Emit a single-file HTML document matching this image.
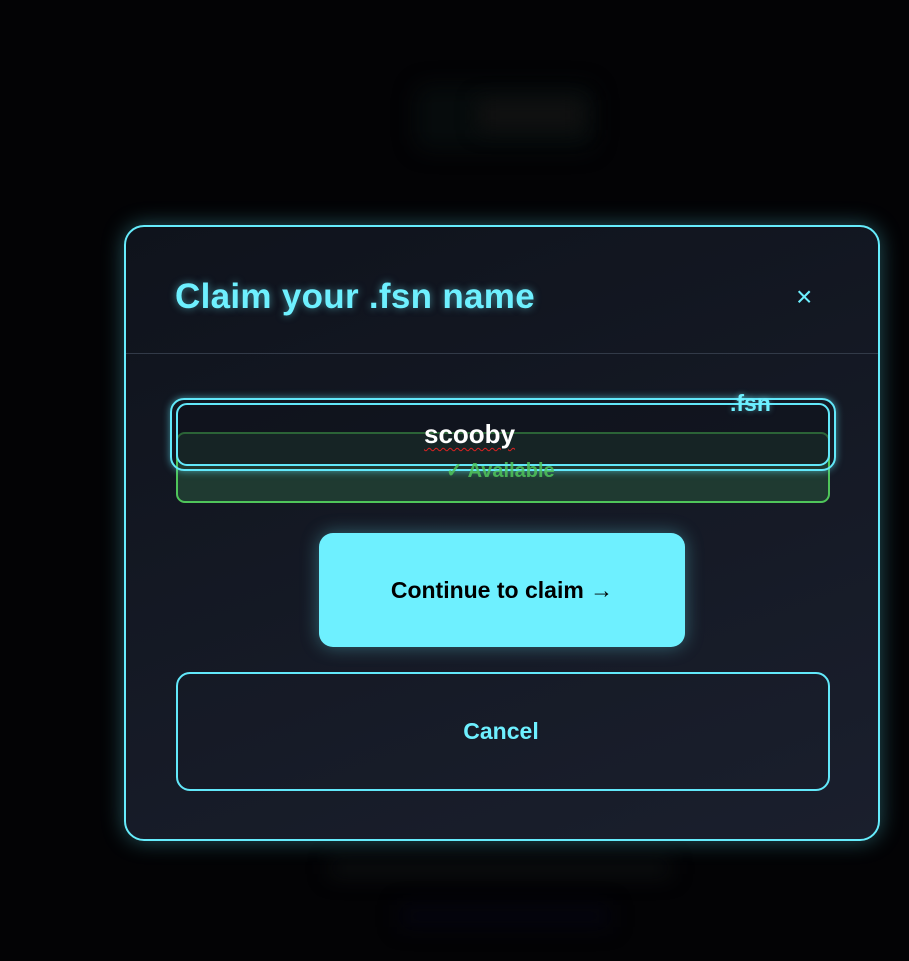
<!DOCTYPE html>
<html><head><meta charset="utf-8"><style>
*{margin:0;padding:0;box-sizing:border-box}
body{width:909px;height:961px;background:#030305;position:relative;overflow:hidden;font-family:"Liberation Sans",sans-serif}
.blob{position:absolute;filter:blur(10px)}
.modal{position:absolute;left:124px;top:225px;width:756px;height:616px;border:2px solid #66ecfc;border-radius:20px;background:linear-gradient(160deg,#0f131c,#1a1f2d);box-shadow:0 0 22px rgba(98,232,250,.35)}
.title{position:absolute;left:49px;top:50px;font-size:35px;font-weight:bold;color:#6ef0ff;text-shadow:0 0 8px rgba(110,240,255,.5);letter-spacing:0.3px}
.close{position:absolute;left:670px;top:54px;font-size:28px;color:#6ef0ff}
.div{position:absolute;left:0;right:0;top:126px;height:1px;background:#323a48}
.abs{position:absolute}
</style></head><body>
<div class="blob" style="left:415px;top:85px;width:180px;height:65px;border-radius:14px;background:#060b0c"></div>
<div class="blob" style="left:478px;top:100px;width:105px;height:30px;background:#111"></div>
<div class="blob" style="left:330px;top:860px;width:340px;height:16px;background:#0c0f10"></div>
<div class="blob" style="left:400px;top:905px;width:210px;height:22px;background:#04040f"></div>
<div class="modal">
<div class="title">Claim your .fsn name</div>
<div class="close">×</div>
<div class="div"></div>
<div class="abs" style="left:50px;top:205px;width:654px;height:71px;border:2px solid #4fc55a;border-radius:9px;background:#1f3a31"></div>
<div class="abs" style="left:44px;top:171px;width:666px;height:73px;border:2px solid #62e8fa;border-radius:14px;box-shadow:0 0 8px rgba(98,232,250,.6)"></div>
<div class="abs" style="left:50px;top:176px;width:654px;height:63px;border:2px solid #62e8fa;border-radius:11px;background:rgba(15,19,28,.55)"></div>
<div class="abs" style="left:298px;top:192px;font-size:26px;font-weight:bold;color:#fff;text-decoration:underline wavy #d22;text-decoration-thickness:1px;text-underline-offset:4px">scooby</div>
<div class="abs" style="left:604px;top:163px;font-size:23px;font-weight:bold;color:#6ef0ff;text-shadow:0 0 6px rgba(110,240,255,.5)">.fsn</div>
<div class="abs" style="left:320px;top:231px;font-size:20px;font-weight:bold;color:#4fc55a;opacity:.85">✓ Available</div>
<div class="abs" style="left:193px;top:306px;width:366px;height:114px;background:#6ef0ff;border-radius:14px;box-shadow:0 0 18px rgba(110,240,255,.35);display:flex;align-items:center;justify-content:center;font-size:23px;font-weight:bold;color:#000">Continue to claim →</div>
<div class="abs" style="left:50px;top:445px;width:654px;height:119px;border:2px solid #62e8fa;border-radius:14px;display:flex;align-items:center;justify-content:center;font-size:23px;font-weight:bold;color:#6ef0ff;padding-right:4px">Cancel</div>
</div>
</body></html>
